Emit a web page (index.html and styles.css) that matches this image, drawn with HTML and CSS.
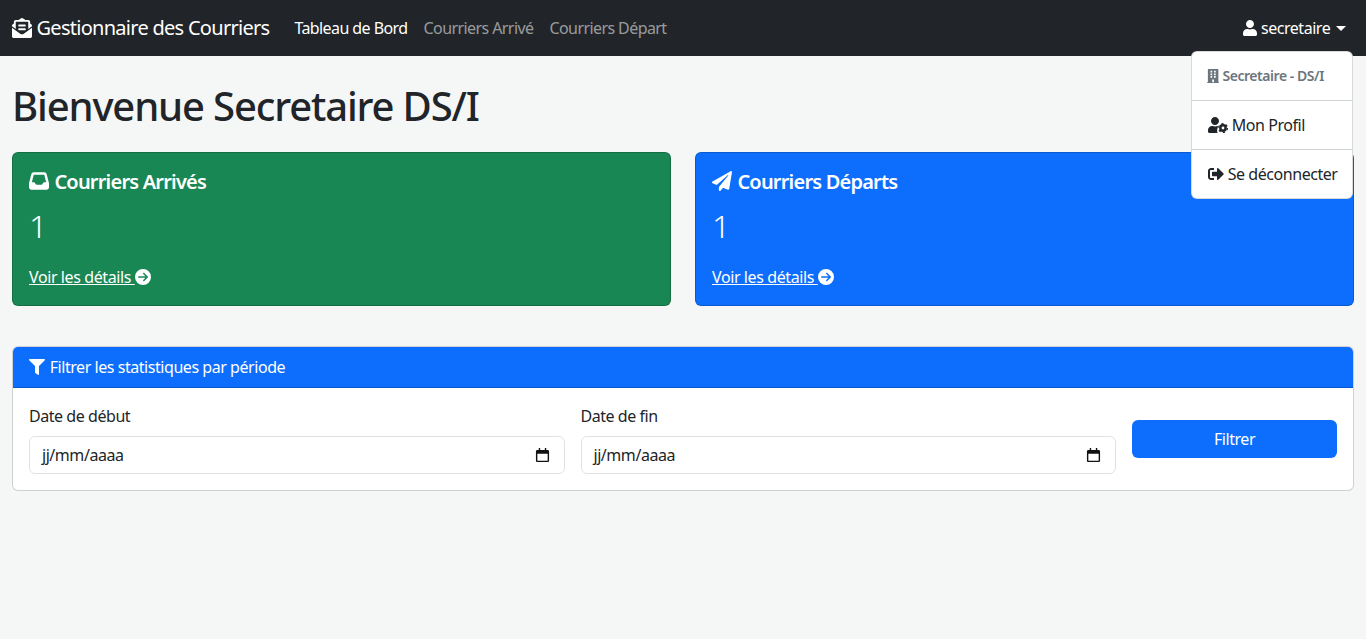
FILE: index.html
```html
<!DOCTYPE html>
<html lang="fr">
<head>
  <meta charset="UTF-8" />
  <meta name="viewport" content="width=device-width, initial-scale=1" />
  <title>Gestionnaire des Courriers</title>
  <link rel="stylesheet" href="styles.css">
</head>
<body>
  <nav class="navbar">
    <a class="brand" href="#">
      <svg class="icon" viewBox="0 0 512 512"><path d="M176 216h160c8.84 0 16-7.16 16-16v-16c0-8.84-7.16-16-16-16H176c-8.84 0-16 7.16-16 16v16c0 8.84 7.16 16 16 16zm-16 80c0 8.84 7.16 16 16 16h160c8.84 0 16-7.16 16-16v-16c0-8.84-7.16-16-16-16H176c-8.84 0-16 7.16-16 16v16zm96 121.13c-16.42 0-32.84-5.06-46.86-15.19L0 250.86V464c0 26.51 21.49 48 48 48h416c26.51 0 48-21.49 48-48V250.86L302.86 401.94c-14.02 10.12-30.44 15.19-46.86 15.19zm237.61-254.18c-8.85-6.94-17.24-13.47-29.61-22.81V96c0-26.51-21.49-48-48-48h-77.55c-3.04-2.2-5.87-4.26-9.04-6.56C312.6 29.17 279.2-.35 256 0c-23.2-.35-56.59 29.17-73.41 41.44-3.17 2.3-6 4.36-9.04 6.56H96c-26.51 0-48 21.49-48 48v44.14c-12.37 9.33-20.76 15.87-29.61 22.81A47.995 47.995 0 0 0 0 200.72v10.65l96 69.35V96h320v184.72l96-69.35v-10.65c0-14.74-6.78-28.67-18.39-37.77z"/></svg>
      Gestionnaire des Courriers
    </a>
    <ul class="nav-links">
      <li><a class="active" href="#">Tableau de Bord</a></li>
      <li><a href="#">Courriers Arrivé</a></li>
      <li><a href="#">Courriers Départ</a></li>
    </ul>
    <div class="user-menu">
      <a class="user-toggle" href="#">
        <svg class="icon" viewBox="0 0 448 512"><path d="M224 256c70.7 0 128-57.3 128-128S294.7 0 224 0 96 57.3 96 128s57.3 128 128 128zm89.6 32h-16.7c-22.2 10.2-46.9 16-72.9 16s-50.6-5.8-72.9-16h-16.7C60.2 288 0 348.2 0 422.4V464c0 26.5 21.5 48 48 48h352c26.5 0 48-21.5 48-48v-41.6c0-74.2-60.2-134.4-134.4-134.4z"/></svg>
        secretaire
        <span class="caret"></span>
      </a>
      <ul class="dropdown">
        <li class="dropdown-header">
          <svg class="icon" viewBox="0 0 448 512"><path d="M436 480h-20V24c0-13.255-10.745-24-24-24H56C42.745 0 32 10.745 32 24v456H12c-6.627 0-12 5.373-12 12v20h448v-20c0-6.627-5.373-12-12-12zM128 76c0-6.627 5.373-12 12-12h40c6.627 0 12 5.373 12 12v40c0 6.627-5.373 12-12 12h-40c-6.627 0-12-5.373-12-12V76zm0 96c0-6.627 5.373-12 12-12h40c6.627 0 12 5.373 12 12v40c0 6.627-5.373 12-12 12h-40c-6.627 0-12-5.373-12-12v-40zm52 148h-40c-6.627 0-12-5.373-12-12v-40c0-6.627 5.373-12 12-12h40c6.627 0 12 5.373 12 12v40c0 6.627-5.373 12-12 12zm76 160h-64v-84c0-6.627 5.373-12 12-12h40c6.627 0 12 5.373 12 12v84zm64-172c0 6.627-5.373 12-12 12h-40c-6.627 0-12-5.373-12-12v-40c0-6.627 5.373-12 12-12h40c6.627 0 12 5.373 12 12v40zm0-96c0 6.627-5.373 12-12 12h-40c-6.627 0-12-5.373-12-12v-40c0-6.627 5.373-12 12-12h40c6.627 0 12 5.373 12 12v40zm0-96c0 6.627-5.373 12-12 12h-40c-6.627 0-12-5.373-12-12V76c0-6.627 5.373-12 12-12h40c6.627 0 12 5.373 12 12v40z"/></svg>
          Secretaire - DS/I
        </li>
        <li>
          <a class="dropdown-item" href="#">
            <svg class="icon" viewBox="0 0 640 512"><path d="M224 256c70.7 0 128-57.3 128-128S294.7 0 224 0 96 57.3 96 128s57.3 128 128 128zM134 288C60 288 0 348 0 422v42c0 26 21 48 48 48h262c-20-32-30-92 0-172 10-20 10-40 4-52h-17c-22 10-47 16-73 16s-51-6-73-16z"/><circle cx="480" cy="352" r="85" fill="none" stroke="currentColor" stroke-width="80"/><circle cx="480" cy="352" r="142" fill="none" stroke="currentColor" stroke-width="36" stroke-dasharray="74.3 74.3"/></svg>
            Mon Profil
          </a>
        </li>
        <li>
          <a class="dropdown-item" href="#">
            <svg class="icon" viewBox="0 0 512 512"><path d="M497 273L329 441c-15 15-41 4.5-41-17v-96H152c-13.3 0-24-10.7-24-24v-96c0-13.3 10.7-24 24-24h136V88c0-21.4 25.9-32 41-17l168 168c9.3 9.4 9.3 24.6 0 34zM192 436v-40c0-6.6-5.4-12-12-12H96c-17.7 0-32-14.3-32-32V160c0-17.7 14.3-32 32-32h84c6.6 0 12-5.4 12-12V76c0-6.6-5.4-12-12-12H96c-53 0-96 43-96 96v192c0 53 43 96 96 96h84c6.6 0 12-5.4 12-12z"/></svg>
            Se déconnecter
          </a>
        </li>
      </ul>
    </div>
  </nav>

  <main class="page">
    <h1>Bienvenue Secretaire DS/I</h1>

    <div class="stat-row">
      <div class="stat-card green">
        <h5>
          <svg class="icon" viewBox="0 0 512 512"><path d="M121 32C91.6 32 66 52 58.9 80.5L1.9 308.4C.6 313.5 0 318.7 0 323.9V416c0 35.3 28.7 64 64 64H448c35.3 0 64-28.7 64-64V323.9c0-5.2-.6-10.4-1.9-15.5l-57-227.9C446 52 420.4 32 391 32H121zm0 64H391l48 192H387.8c-12.1 0-23.2 6.8-28.6 17.7l-14.3 28.6c-5.4 10.8-16.5 17.7-28.6 17.7H195.8c-12.1 0-23.2-6.8-28.6-17.7l-14.3-28.6c-5.4-10.8-16.5-17.7-28.6-17.7H73L121 96z"/></svg>
          Courriers Arrivés
        </h5>
        <p class="stat-value">1</p>
        <a class="stat-link" href="#">Voir les détails
          <svg class="icon" viewBox="0 0 512 512"><path d="M0 256a256 256 0 1 0 512 0A256 256 0 1 0 0 256zM297 385c-9.4 9.4-24.6 9.4-33.9 0s-9.4-24.6 0-33.9l71-71L120 280c-13.3 0-24-10.7-24-24s10.7-24 24-24l214.1 0-71-71c-9.4-9.4-9.4-24.6 0-33.9s24.6-9.4 33.9 0L409 239c9.4 9.4 9.4 24.6 0 33.9L297 385z"/></svg>
        </a>
      </div>
      <div class="stat-card blue">
        <h5>
          <svg class="icon" viewBox="0 0 512 512"><path d="M476 3.2L12.5 270.6c-18.1 10.4-15.8 35.6 2.2 43.2L121 358.4l287.3-253.2c5.5-4.9 13.3 2.6 8.6 8.3L176 407v80.5c0 23.6 28.5 32.9 42.5 15.8L282 426l124.6 52.2c14.2 6 30.4-2.9 33-18.2l72-432C515 7.8 493.3-6.8 476 3.2z"/></svg>
          Courriers Départs
        </h5>
        <p class="stat-value">1</p>
        <a class="stat-link" href="#">Voir les détails
          <svg class="icon" viewBox="0 0 512 512"><path d="M0 256a256 256 0 1 0 512 0A256 256 0 1 0 0 256zM297 385c-9.4 9.4-24.6 9.4-33.9 0s-9.4-24.6 0-33.9l71-71L120 280c-13.3 0-24-10.7-24-24s10.7-24 24-24l214.1 0-71-71c-9.4-9.4-9.4-24.6 0-33.9s24.6-9.4 33.9 0L409 239c9.4 9.4 9.4 24.6 0 33.9L297 385z"/></svg>
        </a>
      </div>
    </div>

    <section class="filter-card">
      <div class="filter-header">
        <svg class="icon" viewBox="0 0 512 512"><path d="M487.976 0H24.028C2.71 0-8.047 25.866 7.058 40.971L192 225.941V432c0 7.831 3.821 15.17 10.237 19.662l80 55.98C298.02 518.69 320 507.493 320 487.98V225.941l184.947-184.97C520.021 25.896 509.338 0 487.976 0z"/></svg>
        Filtrer les statistiques par période
      </div>
      <form class="filter-body">
        <div class="field">
          <label>Date de début</label>
          <div class="date-input">
            <span>jj/mm/aaaa</span>
            <svg class="cal" viewBox="0 0 16 16"><path d="M4 0v2H2.5C1.7 2 1 2.7 1 3.5v10c0 .8.7 1.5 1.5 1.5h11c.8 0 1.5-.7 1.5-1.5v-10c0-.8-.7-1.5-1.5-1.5H12V0h-1.5v2h-5V0zM2.5 6h11v7.5h-11z"/></svg>
          </div>
        </div>
        <div class="field">
          <label>Date de fin</label>
          <div class="date-input">
            <span>jj/mm/aaaa</span>
            <svg class="cal" viewBox="0 0 16 16"><path d="M4 0v2H2.5C1.7 2 1 2.7 1 3.5v10c0 .8.7 1.5 1.5 1.5h11c.8 0 1.5-.7 1.5-1.5v-10c0-.8-.7-1.5-1.5-1.5H12V0h-1.5v2h-5V0zM2.5 6h11v7.5h-11z"/></svg>
          </div>
        </div>
        <button class="btn-filter" type="button">Filtrer</button>
      </form>
    </section>
  </main>
</body>
</html>
```

FILE: styles.css
```css
* {
  box-sizing: border-box;
}

body {
  margin: 0;
  font-family: "Noto Sans", "Open Sans", sans-serif;
  font-size: 16px;
  line-height: 24px;
  letter-spacing: -0.45px;
  color: #212529;
  background: #f5f7f6;
}

a {
  text-decoration: none;
  color: inherit;
}

ul {
  list-style: none;
  margin: 0;
  padding: 0;
}

.icon {
  display: inline-block;
  height: 16px;
  width: auto;
  fill: currentColor;
  vertical-align: -2px;
}

/* barre du haut */
.navbar {
  display: flex;
  align-items: center;
  height: 56px;
  padding: 0 12px;
  background: #212529;
  color: #fff;
}

.brand {
  font-size: 20px;
  letter-spacing: -0.72px;
  margin-right: 17px;
  white-space: nowrap;
}

.brand .icon {
  height: 20px;
  vertical-align: -3px;
}

.nav-links {
  display: flex;
}

.nav-links a {
  display: block;
  padding: 8px;
  letter-spacing: -0.58px;
  color: rgba(255, 255, 255, 0.55);
}

.nav-links a.active {
  color: #fff;
}

.user-menu {
  position: relative;
  margin-left: auto;
}

.user-toggle {
  display: block;
  padding: 8px;
}

.caret {
  display: inline-block;
  margin-left: 2px;
  vertical-align: 3px;
  border-top: 5px solid #fff;
  border-left: 5px solid transparent;
  border-right: 5px solid transparent;
}

.dropdown {
  position: absolute;
  top: 43px;
  right: 1px;
  width: 162px;
  background: #fff;
  border: 1px solid rgba(0, 0, 0, 0.15);
  border-radius: 6px;
  color: #212529;
  z-index: 10;
}

.dropdown li + li {
  border-top: 1px solid #d0d2d4;
}

.dropdown-header {
  padding: 12px 15px;
  height: 48px;
  font-size: 14px;
  font-weight: 600;
  color: #6c757d;
}

.dropdown-header .icon {
  height: 14px;
}

.dropdown-item {
  display: block;
  padding: 12px 15px 12px 16px;
  height: 48px;
  white-space: nowrap;
}

/* cartes */
.page {
  padding: 0 12px;
}

h1 {
  margin: 26px 0 22px;
  font-size: 40px;
  line-height: 48px;
  font-weight: 500;
  letter-spacing: -1.15px;
}

.stat-row {
  display: grid;
  grid-template-columns: 1fr 1fr;
  gap: 24px;
  margin-bottom: 40px;
}

.stat-card {
  height: 154px;
  padding: 15px 16px;
  border: 1px solid rgba(0, 0, 0, 0.18);
  border-radius: 6px;
  color: #fff;
}

.stat-card.green {
  background: #198754;
}

.stat-card.blue {
  background: #0d6efd;
}

.stat-card h5 {
  margin: 0 0 6px;
  font-size: 20px;
  line-height: 28px;
  font-weight: 600;
  letter-spacing: -0.8px;
}

.stat-card h5 .icon {
  height: 20px;
  margin-right: 1px;
  vertical-align: -2px;
}

.stat-value {
  margin: 0 0 15px;
  font-size: 32px;
  line-height: 48px;
  font-weight: 300;
}

.stat-link {
  letter-spacing: -0.4px;
  text-decoration: underline;
}

/* filtre */
.filter-card {
  background: #fff;
  border: 1px solid rgba(0, 0, 0, 0.18);
  border-radius: 6px;
  overflow: hidden;
}

.filter-header {
  height: 41px;
  padding: 8px 16px;
  background: #0d6efd;
  border-bottom: 1px solid rgba(0, 0, 0, 0.18);
  color: #fff;
}

.filter-header .icon {
  margin-right: 1px;
}

.filter-body {
  display: flex;
  align-items: flex-end;
  gap: 16px;
  padding: 16px;
}

.field {
  flex: 1;
}

.field label {
  display: block;
  margin-bottom: 8px;
}

.date-input {
  display: flex;
  align-items: center;
  justify-content: space-between;
  height: 38px;
  padding: 0 14px 0 12px;
  border: 1px solid #dee2e6;
  border-radius: 6px;
}

.cal {
  width: 15px;
  height: 15px;
  fill: #111;
}

.btn-filter {
  width: 205px;
  height: 38px;
  margin-bottom: 16px;
  background: #0d6efd;
  border: 0;
  border-radius: 6px;
  color: #fff;
  font: inherit;
  letter-spacing: inherit;
}
```
